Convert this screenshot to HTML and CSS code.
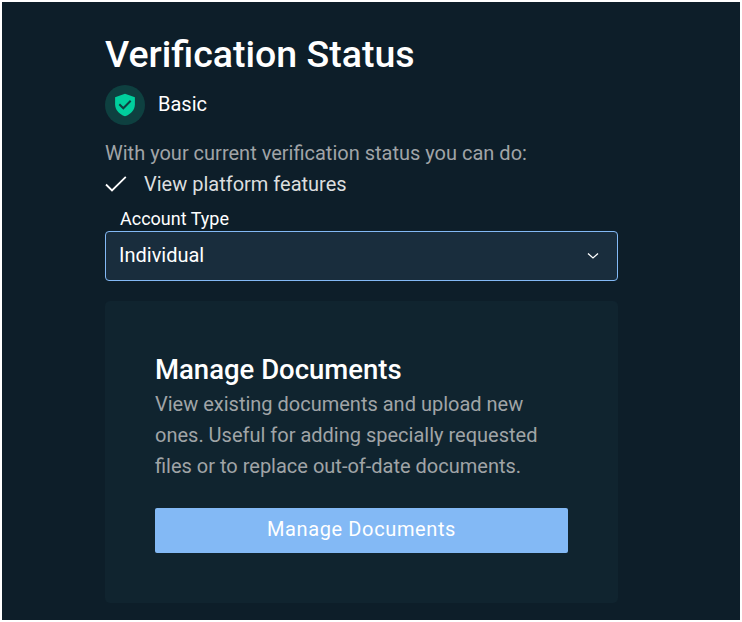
FILE: index.html
```html
<!DOCTYPE html>
<html lang="en">
<head>
<meta charset="utf-8">
<title>Verification Status</title>
<link rel="stylesheet" href="styles.css">
</head>
<body>
<main class="page">
  <h1 class="title">Verification Status</h1>
  <div class="level">
    <span class="badge">
      <svg width="20" height="24" viewBox="0 0 20 24"><path fill="#00cf9d" d="M10 0.800 19.900 4.300v6.900c0 5.400-3.900 10.100-9.900 12.100C4 21.300.1 16.600.1 11.200V4.300Z"/><path fill="none" stroke="#0e4040" stroke-width="2" d="m4.300 11.300 4 4 7.400-7.600"/></svg>
    </span>
    <span class="level-name">Basic</span>
  </div>
  <p class="intro">With your current verification status you can do:</p>
  <div class="feature">
    <svg width="22" height="16" viewBox="0 0 22 16"><path fill="none" stroke="#fff" stroke-width="1.800" d="m1 8.500 6 6L20.800.8"/></svg>
    <span>View platform features</span>
  </div>
  <div class="label">Account Type</div>
  <div class="select">
    <span class="select-value">Individual</span>
    <svg width="12" height="8" viewBox="0 0 12 8"><path fill="none" stroke="#fff" stroke-width="1.300" d="m1 1.500 5 4.500 5-4.500"/></svg>
  </div>
  <section class="card">
    <h2 class="card-title">Manage Documents</h2>
    <p class="card-text">View existing documents and upload new<br>ones. Useful for adding specially requested<br>files or to replace out-of-date documents.</p>
    <button class="button">Manage Documents</button>
  </section>
</main>
</body>
</html>
```
FILE: styles.css
```css
* { box-sizing: border-box; margin: 0; }
body { background: #fff; font-family: Roboto, sans-serif; color: #fff; }
.page { height: 622px; border: 2px solid #fff; background: #0d1e29; padding: 30px 122px 0 103px; }
.title { font-size: 37.5px; line-height: 44px; font-weight: 500; white-space: nowrap; }
.level { display: flex; align-items: center; height: 40px; margin-top: 9px; }
.badge { display: flex; align-items: center; justify-content: center; width: 40px; height: 40px; border-radius: 50%; background: #0e4040; }
.level-name { margin-left: 13px; padding-bottom: 2px; font-size: 20px; line-height: 24px; }
.intro { margin-top: 16px; font-size: 20px; line-height: 24px; color: #a0a4a7; white-space: nowrap; }
.feature { display: flex; align-items: center; gap: 17px; height: 24px; margin-top: 7px; font-size: 20px; color: #dcdedf; }
.label { margin: 12px 0 0 15px; font-size: 18px; line-height: 22px; }
.select { display: flex; align-items: center; justify-content: space-between; height: 50px; margin-top: 1px; padding: 0 18px 0 13px; border: 1px solid #83b9f5; border-radius: 4px; background: #192d3d; font-size: 20px; }
.select-value { padding-bottom: 2px; }
.card { height: 302px; margin-top: 20px; padding: 50px; border-radius: 5px; background: #10242f; }
.card-title { font-size: 27.5px; line-height: 38px; font-weight: 500; white-space: nowrap; }
.card-text { font-size: 20px; line-height: 31px; color: #a0a4a7; white-space: nowrap; }
.button { display: block; width: 413px; height: 45px; margin-top: 26px; padding: 0 0 2px; border: 0; border-radius: 2px; background: #83b9f5; color: #fff; font: 400 20px/43px Roboto, sans-serif; letter-spacing: 0.625px; }
```
